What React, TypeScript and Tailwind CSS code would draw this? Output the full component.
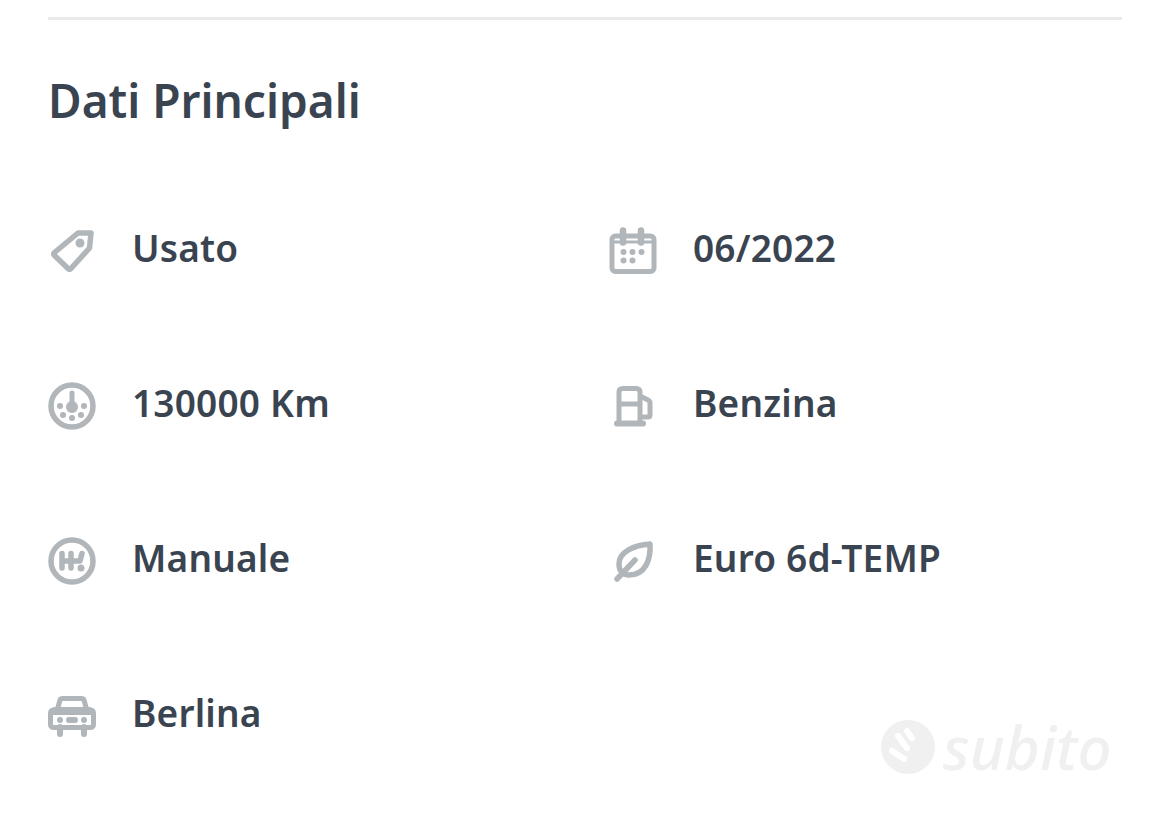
import React from 'react';

const iconClass = 'w-12 h-12 mt-px shrink-0 text-[#b1b6ba]';

const TagIcon = () => (
    <svg viewBox="0 0 48 48" className={iconClass} fill="none" stroke="currentColor" strokeWidth="5.5" strokeLinejoin="round">
        <path d="M30 6 L43 6 L41.500 21 L23 41.500 Q21.500 43 20 41.500 L6.500 28.500 Q5 27 6.500 25.500 Z" />
        <circle cx="32" cy="16" r="4.500" fill="currentColor" stroke="none" />
    </svg>
);

const CalendarIcon = () => (
    <svg viewBox="0 0 48 48" className={iconClass} fill="none" stroke="currentColor">
        <rect x="3" y="9" width="42" height="35.500" rx="3.500" strokeWidth="5" />
        <path d="M2 15h44" strokeWidth="3" />
        <path d="M14 3.500v12M32 3.500v12" strokeWidth="6.500" strokeLinecap="round" />
        <g fill="currentColor" stroke="none">
            <circle cx="14.500" cy="25" r="3" />
            <circle cx="23.500" cy="25" r="3" />
            <circle cx="32.500" cy="25" r="3" />
            <circle cx="14.500" cy="33.500" r="3" />
            <circle cx="23.500" cy="33.500" r="3" />
        </g>
    </svg>
);

const GaugeIcon = () => (
    <svg viewBox="0 0 48 48" className={iconClass} fill="none" stroke="currentColor">
        <circle cx="24" cy="24" r="21" strokeWidth="5.500" />
        <path d="M24 11v14" strokeWidth="5" strokeLinecap="round" />
        <g fill="currentColor" stroke="none">
            <circle cx="24" cy="25" r="6" />
            <circle cx="12" cy="24" r="3" />
            <circle cx="36" cy="24" r="3" />
            <circle cx="15" cy="33" r="3" />
            <circle cx="33" cy="33" r="3" />
            <circle cx="24" cy="36" r="3" />
        </g>
    </svg>
);

const FuelIcon = () => (
    <svg viewBox="0 0 48 48" className={iconClass} fill="none" stroke="currentColor" strokeWidth="5">
        <path d="M10 40V10Q10 6.500 14 6.500H27Q31 6.500 31 10V40" />
        <path d="M31 14L39 18Q41 19 41 21V33Q41 35 39 35H31" />
        <path d="M10 22H31" />
        <path d="M8 41.500H34" strokeWidth="6" strokeLinecap="round" />
    </svg>
);

const GearIcon = () => (
    <svg viewBox="0 0 48 48" className={iconClass} fill="none" stroke="currentColor">
        <circle cx="24" cy="24" r="21" strokeWidth="5.500" />
        <path d="M14 16.500V31M23 16.500V31M14 24H32L34 16.500" strokeWidth="5.500" strokeLinecap="round" strokeLinejoin="round" />
        <circle cx="33" cy="31" r="3.500" fill="currentColor" stroke="none" />
    </svg>
);

const LeafIcon = () => (
    <svg viewBox="0 0 48 48" className={iconClass} fill="none" stroke="currentColor" strokeWidth="5.500" strokeLinecap="round" strokeLinejoin="round">
        <path d="M41 7C42 23 36 38 20 38C14 38 10 34 10 27C10 15 25 8 41 7Z" />
        <path d="M8 42L26 23" />
    </svg>
);

const CarIcon = () => (
    <svg viewBox="0 0 48 48" className={iconClass} fill="none" stroke="currentColor">
        <path d="M9 19L12 8Q12.500 6.500 14.500 6.500H33.500Q35.500 6.500 36 8L39 19" strokeWidth="5" />
        <rect x="2.500" y="18" width="43" height="17.500" rx="3" strokeWidth="5" />
        <path d="M2 20Q2 15 8 15H40Q46 15 46 20V23H2Z" fill="currentColor" stroke="none" />
        <path d="M12 35v7M36 35v7" strokeWidth="6" strokeLinecap="round" />
        <g fill="currentColor" stroke="none">
            <circle cx="12" cy="28" r="3" />
            <circle cx="36" cy="28" r="3" />
            <rect x="18" y="25" width="12" height="6" rx="3" />
        </g>
    </svg>
);

const SubitoMark = () => (
    <svg viewBox="0 0 54 54" className="w-[54px] h-[54px] shrink-0">
        <circle cx="27" cy="27" r="27" fill="#f0f0f0" />
        <g stroke="#ffffff" strokeWidth="6" strokeLinecap="round">
            <path d="M26 11L31 18" />
            <path d="M17 16L26 28" />
            <path d="M11 31L23 39" />
        </g>
    </svg>
);

const items = [
    { icon: <TagIcon />, label: 'Usato' },
    { icon: <CalendarIcon />, label: '06/2022' },
    { icon: <GaugeIcon />, label: '130000 Km' },
    { icon: <FuelIcon />, label: 'Benzina' },
    { icon: <GearIcon />, label: 'Manuale' },
    { icon: <LeafIcon />, label: 'Euro 6d-TEMP' },
    { icon: <CarIcon />, label: 'Berlina' },
];

export default function App() {
    return (
        <div className="relative w-[1170px] h-[817px] overflow-hidden bg-white px-12 pt-[17px] font-['Noto_Sans','Liberation_Sans',sans-serif] text-[#3a4450]">
            <div className="h-[3px] bg-[#e8eaec]" />
            <h1 className="mt-[50px] text-[46px] leading-[60px] font-semibold">Dati Principali</h1>
            <div className="mt-[96px] grid grid-cols-[561px_1fr] auto-rows-[155px]">
                {items.map((item) => (
                    <div key={item.label} className="flex items-start gap-[36px]">
                        {item.icon}
                        <span className="text-[37px] leading-[44px] font-semibold tracking-[0.2px]">{item.label}</span>
                    </div>
                ))}
            </div>
            {/* watermark sits over the page */}
            <div className="absolute left-[881px] top-[720px] flex items-center gap-[8px]">
                <SubitoMark />
                <span className="text-[60px] leading-[54px] italic font-medium text-[#f0f0f0]">subito</span>
            </div>
        </div>
    );
}
